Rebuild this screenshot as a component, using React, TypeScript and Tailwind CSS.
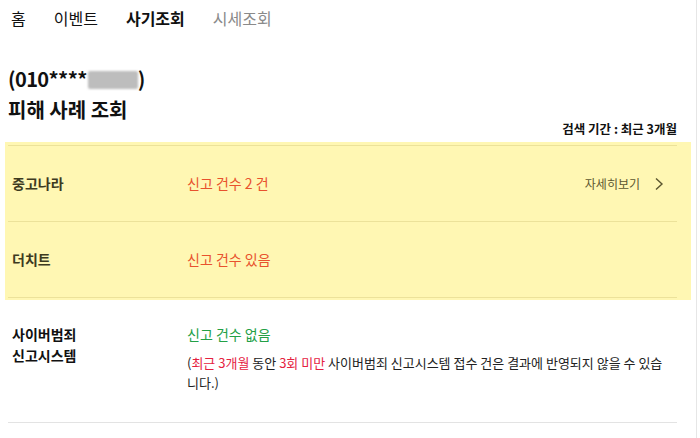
import React from 'react';

const font = { fontFamily: '"Noto Sans CJK KR", "Noto Sans", sans-serif' };

function Chevron() {
  return (
    <svg width="10" height="14" viewBox="0 0 10 14" fill="none" className="ml-[14px]">
      <path d="M2 1.5 L8 7 L2 12.5" stroke="#5b5630" strokeWidth="1.4" />
    </svg>
  );
}

export default function App() {
  return (
    <div className="w-[700px] h-[438px] bg-white overflow-hidden flex text-[#111]" style={font}>
      <div className="w-[697px] border-r border-[#e6e6e6] flex flex-col">
        <nav className="flex items-center h-[36px] pl-[11px] text-[16px]">
          <span className="mr-[28px]">홈</span>
          <span className="mr-[28px]">이벤트</span>
          <span className="mr-[28px] font-bold">사기조회</span>
          <span className="text-[#8a8a8a]">시세조회</span>
        </nav>

        <div className="pl-[8px] mt-[29px]">
          <div className="flex items-center text-[20px] font-bold leading-[28px] tracking-[-0.6px]">
            <span>(010****</span>
            <span className="inline-block w-[50px] h-[18px] bg-[#bdbdbd] rounded-[2px] blur-[1px] mt-[2px] ml-[1px]" />
            <span>)</span>
          </div>
          <h1 className="text-[20px] font-bold leading-[24px] mt-[5px]">피해 사례 조회</h1>
        </div>

        <div className="flex justify-end pr-[19px] text-[12.5px] font-bold leading-[14px]">
          검색 기간 : 최근 3개월
        </div>

        <div className="bg-[#fff7b3] mx-[5px] mt-[6px] pt-[3px] pb-[2px]">
          <div className="ml-[3px] mr-[14px] border-t border-b border-[#ece29a]">
            <div className="flex items-center h-[76px] border-b border-[#ece29a]">
              <div className="w-[179px] pl-[4px] text-[14px] font-bold text-[#3d3a1f]">중고나라</div>
              <div className="flex-1 text-[14px] text-[#e8522d]">신고 건수 2 건</div>
              <div className="flex items-center pr-[13px] text-[12px] text-[#5b5630]">
                자세히보기
                <Chevron />
              </div>
            </div>
            <div className="flex items-center h-[75px]">
              <div className="w-[179px] pl-[4px] text-[14px] font-bold text-[#3d3a1f]">더치트</div>
              <div className="flex-1 text-[14px] text-[#e8522d]">신고 건수 있음</div>
            </div>
          </div>
        </div>

        <div className="ml-[8px] mr-[19px] flex pt-[24px] pb-[29px] border-b border-[#e3e3e3]">
          <div className="w-[179px] pl-[4px] text-[14px] font-bold leading-[21px]">
            사이버범죄
            <br />
            신고시스템
          </div>
          <div className="flex-1 pr-[8px]">
            <div className="text-[14px] text-[#23a046] leading-[21px]">신고 건수 없음</div>
            <p className="mt-[8px] text-[13px] leading-[20px] text-[#222] break-all">
              (<span className="text-[#e5213f]">최근 3개월</span> 동안{' '}
              <span className="text-[#e5213f]">3회 미만</span> 사이버범죄 신고시스템 접수 건은 결과에 반영되지 않을 수 있습니다.)
            </p>
          </div>
        </div>
      </div>
    </div>
  );
}
